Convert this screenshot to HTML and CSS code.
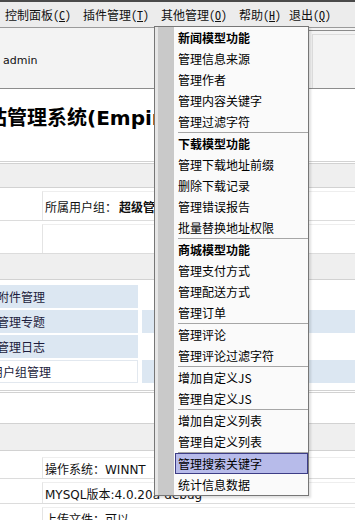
FILE: index.html
```html
<!DOCTYPE html>
<html lang="zh-CN">
<head>
    <meta charset="UTF-8">
    <title>帝国网站管理系统</title>
    <link rel="stylesheet" href="styles.css">
</head>
<body>
    <div class="menubar">
        <span class="mb-item">控制面板(<u>C</u>)</span>
        <span class="mb-item">插件管理(<u>T</u>)</span>
        <span class="mb-item">其他管理(<u>O</u>)</span>
        <span class="mb-item short">帮助(<u>H</u>)</span>
        <span class="mb-item short">退出(<u>Q</u>)</span>
    </div>

    <div class="topinfo">
        <span class="user">admin</span>
        <div class="topbox"></div>
    </div>

    <div class="frame">
        <h1 class="title">帝国网站管理系统(Empire CMS)</h1>

        <div class="tbl first">
            <div class="band"></div>
            <div class="row tall">
                <div class="cell label"></div>
                <div class="cell">所属用户组：<b>超级管理员</b></div>
            </div>
            <div class="row tall">
                <div class="cell label"></div>
                <div class="cell"></div>
            </div>
        </div>

        <div class="tbl links-tbl">
            <div class="band"></div>
            <div class="links">
                <div class="lk blue">附件管理</div><div class="lk"></div>
                <div class="lk blue">管理专题</div><div class="lk blue"></div>
                <div class="lk blue">管理日志</div><div class="lk"></div>
                <div class="lk plain">用户组管理</div><div class="lk blue"></div>
            </div>
        </div>

        <div class="tbl sys">
            <div class="band"></div>
            <div class="row">
                <div class="cell label"></div>
                <div class="cell">操作系统：WINNT</div>
            </div>
            <div class="row">
                <div class="cell label"></div>
                <div class="cell">MYSQL版本:4.0.20a-debug</div>
            </div>
            <div class="row">
                <div class="cell label"></div>
                <div class="cell">上传文件：可以</div>
            </div>
        </div>
    </div>

    <div class="dropmenu">
        <div class="mi head">新闻模型功能</div>
        <div class="mi">管理信息来源</div>
        <div class="mi">管理作者</div>
        <div class="mi">管理内容关键字</div>
        <div class="mi">管理过滤字符</div>
        <div class="sep"></div>
        <div class="mi head">下载模型功能</div>
        <div class="mi">管理下载地址前缀</div>
        <div class="mi">删除下载记录</div>
        <div class="mi">管理错误报告</div>
        <div class="mi">批量替换地址权限</div>
        <div class="sep"></div>
        <div class="mi head">商城模型功能</div>
        <div class="mi">管理支付方式</div>
        <div class="mi">管理配送方式</div>
        <div class="mi">管理订单</div>
        <div class="sep"></div>
        <div class="mi">管理评论</div>
        <div class="mi">管理评论过滤字符</div>
        <div class="sep"></div>
        <div class="mi">增加自定义JS</div>
        <div class="mi">管理自定义JS</div>
        <div class="sep"></div>
        <div class="mi">增加自定义列表</div>
        <div class="mi">管理自定义列表</div>
        <div class="sep"></div>
        <div class="mi active">管理搜索关键字</div>
        <div class="mi">统计信息数据</div>
    </div>
</body>
</html>
```

FILE: styles.css
```css
body {
    margin: 0;
    width: 355px;
    height: 520px;
    overflow: hidden;
    position: relative;
    background: #fff;
    color: #111;
    font-family: "Noto Sans Mono CJK SC", "Noto Sans CJK SC", sans-serif;
    font-size: 12px;
}

/* top menu bar */
.menubar {
    height: 25px;
    border-top: 2px solid #4a4a4a;
    border-bottom: 1px solid #9a9a9a;
    background: #ececec;
    display: flex;
    align-items: center;
    padding-left: 5px;
    white-space: nowrap;
}
.mb-item { width: 78px; flex: none; }
.mb-item.short { width: 50px; }
.mb-item u { text-decoration: underline; text-underline-offset: 1px; }

.topinfo {
    height: 60px;
    background: #f3f3f3;
    border-bottom: 1px solid #8c8c8c;
    display: flex;
    align-items: center;
}
.user { padding: 4px 0 0 3px; font-family: "DejaVu Sans", sans-serif; font-size: 11px; }
.topbox {
    margin-left: auto;
    align-self: stretch;
    margin-top: 2px;
    width: 46px;
    border-top: 1px solid #8a8a8a;
    box-shadow: inset 3px 3px 0 #f3f3f3, inset 4px 4px 0 #dcdcdc;
}

/* main frame, scrolled a bit to the right */
.frame {
    margin-left: -100px;
    width: 455px;
}
.title {
    margin: 0 0 31px;
    padding: 17px 0 0 27px;
    font-family: "DejaVu Sans", "Noto Sans CJK SC", sans-serif;
    font-size: 20px;
    font-weight: bold;
    line-height: 24px;
    white-space: nowrap;
    color: #000;
}

.tbl.first { border-top: 3px double #d2d2d2; }
.band {
    height: 23px;
    background: #efefef;
    border-bottom: 1px solid #d2d2d2;
}
.links-tbl .band { height: 25px; }

.row {
    display: flex;
    height: 24px;
    border-bottom: 1px solid #dcdcdc;
}
.row.tall { height: 32px; }
.cell {
    display: flex;
    align-items: center;
    white-space: nowrap;
}
.cell.label { width: 142px; flex: none; }
.cell + .cell {
    flex: 1;
    margin: 3px 0 0;
    padding-left: 2px;
    border-left: 1px solid #e4e4e4;
    border-top: 1px solid #eeeeee;
}
.cell b { margin-left: 2px; }

.links {
    display: grid;
    grid-template-columns: 234px 1fr;
    grid-auto-rows: 23px;
    gap: 2px 4px;
    padding: 5px 0 7px 4px;
    border-bottom: 3px double #d2d2d2;
    margin-bottom: 30px;
}
.lk {
    display: flex;
    align-items: center;
    justify-content: center;
    color: #1c1c3c;
    font-family: "Noto Sans CJK SC", sans-serif;
}
.lk.blue { background: #dce7f2; }
.lk.plain { border: 1px solid #e2e8ef; }

.sys { border-top: 1px solid #d2d2d2; }
.sys .band { height: 26px; }
.sys .band + .row { margin-top: 3px; }
.sys .cell { font-family: "DejaVu Sans", "Noto Sans CJK SC", sans-serif; }

/* dropped down menu */
.dropmenu {
    position: absolute;
    top: 26px;
    left: 154px;
    width: 153px;
    border: 1px solid #767676;
    background: linear-gradient(to right, #e6e6e6 0, #e6e6e6 3px, #c9c9c9 3px, #c9c9c9 19px, #fafafa 19px);
    box-shadow: 2px 2px 2px rgba(0, 0, 0, 0.12);
}
.mi {
    height: 19px;
    line-height: 19px;
    margin-left: 20px;
    padding-left: 2px;
    border: 1px solid transparent;
    white-space: nowrap;
    color: #000;
    font-family: "Noto Sans CJK SC", sans-serif;
}
.mi.head { font-weight: bold; }
.mi.active {
    background: #b7bbea;
    border-color: #3d3d86;
}
.sep {
    height: 1px;
    margin-left: 23px;
    background: #a6a6a6;
}
```
